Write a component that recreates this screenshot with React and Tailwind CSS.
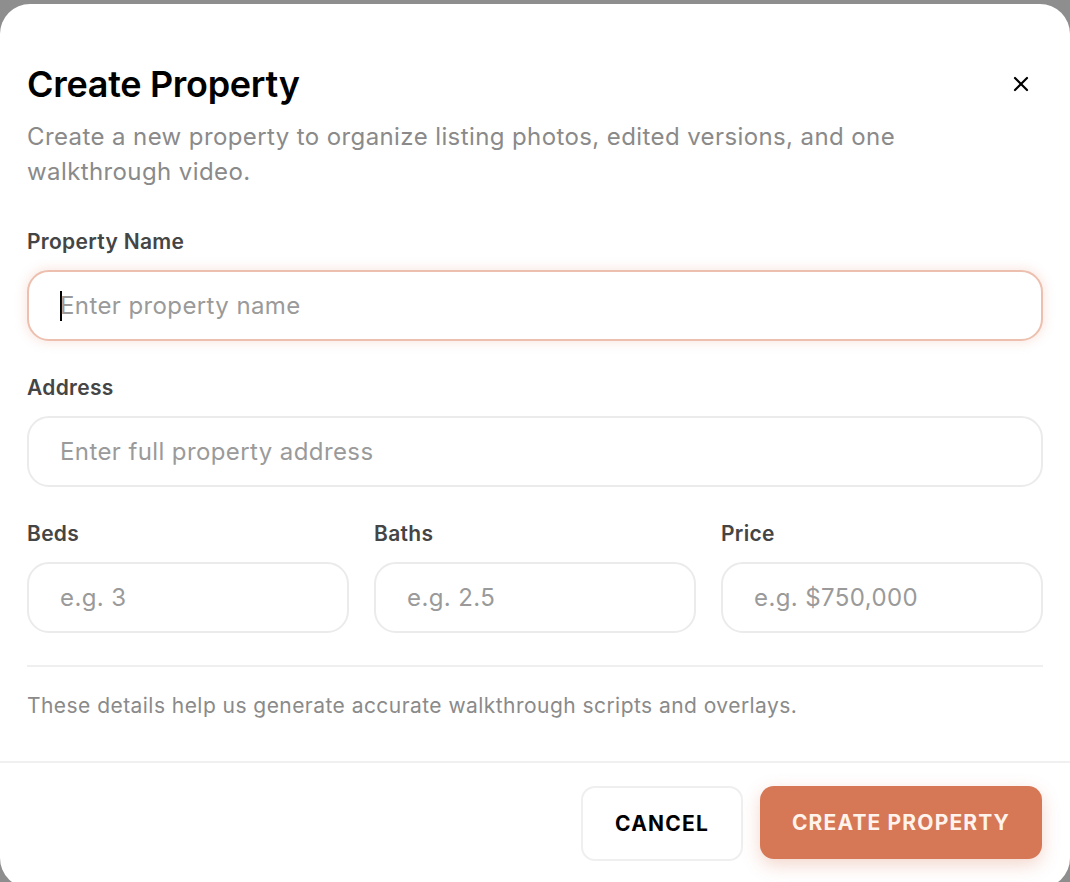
import { X } from "lucide-react";

function Field({ label, placeholder, focused = false }) {
  return (
    <div className="flex flex-col">
      <label className="text-[21px] font-semibold leading-[28px] tracking-[0.3px] text-[#454545]">
        {label}
      </label>
      <div
        className={
          focused
            ? "mt-[14px] flex h-[71px] items-center rounded-[22px] border-2 border-[#ecbfae] bg-white px-[31px] shadow-[0_0_10px_3px_rgba(236,180,160,0.25)]"
            : "mt-[14px] flex h-[71px] items-center rounded-[22px] border-2 border-[#ebebeb] bg-white px-[31px]"
        }
      >
        {focused && <span className="mr-[-2px] h-[30px] w-[2px] bg-black" />}
        <input
          placeholder={placeholder}
          className="w-full bg-transparent text-[24px] tracking-[0.4px] text-[#333] outline-none placeholder:text-[#9a9a9a]"
        />
      </div>
    </div>
  );
}

export default function App() {
  return (
    <div
      className="h-[882px] w-[1070px] overflow-hidden bg-[#8e8e8e] pt-[4px]"
      style={{ fontFamily: "Inter, 'Noto Sans', sans-serif" }}
    >
      <div className="flex h-[884px] flex-col rounded-[30px] bg-white">
        <div className="px-[27px] pt-[58px]">
          <div className="flex items-start justify-between">
            <h1 className="text-[36px] font-semibold leading-[44px] tracking-[-0.3px] text-black">
              Create Property
            </h1>
            <button type="button" className="mr-[10px] mt-[10px] text-black">
              <X size={24} strokeWidth={2.2} />
            </button>
          </div>
          <p className="mt-[13px] max-w-[920px] text-[24px] leading-[35px] tracking-[0.4px] text-[#8a8a8a]">
            Create a new property to organize listing photos, edited versions, and one walkthrough video.
          </p>

          <div className="mt-[39px] flex flex-col gap-[33px]">
            <Field label="Property Name" placeholder="Enter property name" focused />
            <Field label="Address" placeholder="Enter full property address" />
            <div className="grid grid-cols-3 gap-[25px]">
              <Field label="Beds" placeholder="e.g. 3" />
              <Field label="Baths" placeholder="e.g. 2.5" />
              <Field label="Price" placeholder="e.g. $750,000" />
            </div>
          </div>

          <div className="mt-[32px] h-[2px] bg-[#efefef]" />
          <p className="mt-[24px] text-[21px] leading-[30px] tracking-[0.45px] text-[#8a8a8a]">
            These details help us generate accurate walkthrough scripts and overlays.
          </p>
        </div>

        <div className="mt-[40px] border-t-2 border-[#f0f0f0] px-[28px] pt-[23px]">
          <div className="flex justify-end gap-[17px]">
            <button
              type="button"
              className="h-[75px] w-[162px] rounded-[14px] border-2 border-[#efefef] bg-white text-[21px] font-bold tracking-[1.2px] text-black"
            >
              CANCEL
            </button>
            <button
              type="button"
              className="h-[73px] w-[282px] rounded-[14px] bg-[#d67756] text-[21px] font-bold tracking-[1.15px] text-[#fff3ec] shadow-[0_6px_18px_rgba(214,119,86,0.3)]"
            >
              CREATE PROPERTY
            </button>
          </div>
        </div>
      </div>
    </div>
  );
}
